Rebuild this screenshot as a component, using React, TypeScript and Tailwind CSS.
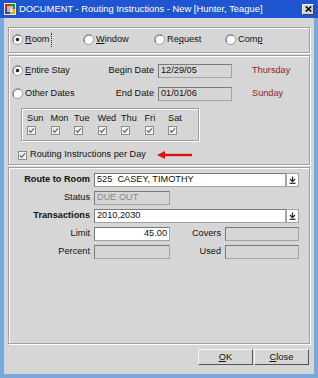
import React from 'react';

const font = { fontFamily: '"Liberation Sans", Arial, sans-serif' };

function Radio({ checked }: { checked?: boolean }) {
  return (
    <svg width="11" height="11" viewBox="0 0 11 11" className="shrink-0">
      <circle cx="5.5" cy="5.5" r="5" fill="#ffffff" stroke="#9a9a9a" strokeWidth="1" />
      <path d="M1.6 8.2 A5 5 0 0 1 8.2 1.6" fill="none" stroke="#7a7a7a" strokeWidth="1" />
      {checked && <circle cx="5.5" cy="5.5" r="1.8" fill="#222222" />}
    </svg>
  );
}

function Check({ size = 9 }: { size?: number }) {
  return (
    <svg width={size} height={size} viewBox="0 0 9 9" className="shrink-0">
      <rect x="0.5" y="0.5" width="8" height="8" fill="#f2f2f2" stroke="#8c8c8c" />
      <path d="M2 4.3 L3.6 6.2 L7 2.4" fill="none" stroke="#6a6a6a" strokeWidth="1.3" />
    </svg>
  );
}

function Field({
  w,
  value,
  white,
  right,
  muted,
}: {
  w: string;
  value?: string;
  white?: boolean;
  right?: boolean;
  muted?: boolean;
}) {
  return (
    <div
      className={`${w} h-[14px] shrink-0 border border-[#a4a4a4] border-t-[#7a7a7a] border-l-[#7a7a7a] flex items-center px-[2px] leading-none whitespace-pre ${
        white ? 'bg-white' : 'bg-[#d6d6d6]'
      } ${right ? 'justify-end' : ''} ${muted ? 'text-[#8a8a8a]' : 'text-[#111]'}`}
    >
      {value}
    </div>
  );
}

function DropButton() {
  return (
    <div className="w-[13px] h-[14px] shrink-0 bg-white border border-[#a4a4a4] flex items-center justify-center">
      <svg width="7" height="8" viewBox="0 0 7 8">
        <path d="M3.5 0.5 V5" stroke="#222" strokeWidth="1.2" />
        <path d="M1 3 L3.5 5.6 L6 3" fill="none" stroke="#222" strokeWidth="1.2" />
        <path d="M0.5 7.3 H6.5" stroke="#222" strokeWidth="1.2" />
      </svg>
    </div>
  );
}

const days = ['Sun', 'Mon', 'Tue', 'Wed', 'Thu', 'Fri', 'Sat'];

export default function App() {
  return (
    <div
      className="w-[318px] h-[378px] bg-[#7aa8dd] flex flex-col text-[9.2px] text-[#111] overflow-hidden"
      style={font}
    >
      {/* title bar */}
      <div className="h-[18px] shrink-0 bg-[#1f55d0] flex items-center pl-[4px] pr-[4px]">
        <svg width="12" height="12" viewBox="0 0 12 12" className="shrink-0">
          <rect x="0" y="0" width="12" height="12" fill="#f4e7c4" />
          <rect x="1" y="1" width="5" height="5" fill="#c42a2a" />
          <rect x="6" y="1" width="5" height="5" fill="#2a8a3a" />
          <rect x="1" y="6" width="5" height="5" fill="#2a44c4" />
          <rect x="6" y="6" width="5" height="5" fill="#e0b020" />
          <rect x="3" y="3" width="6" height="6" fill="#ffffff" opacity="0.6" />
        </svg>
        <span className="ml-[3px] text-white text-[9.4px] whitespace-nowrap">
          DOCUMENT - Routing Instructions - New [Hunter, Teague]
        </span>
        <div className="ml-auto w-[12px] h-[11px] bg-[#d6d6d6] border border-[#f4f4f4] border-r-[#404040] border-b-[#404040] flex items-center justify-center">
          <svg width="7" height="6" viewBox="0 0 7 6">
            <path d="M0.8 0.5 L6.2 5.5 M6.2 0.5 L0.8 5.5" stroke="#000" strokeWidth="1.6" />
          </svg>
        </div>
      </div>

      {/* client */}
      <div className="flex-1 mx-[4px] mb-[4px] bg-[#d6d6d6] flex flex-col px-[4px] pt-[9px]">
        {/* routing type */}
        <div className="h-[26px] shrink-0 border border-[#a0a0a0] shadow-[inset_1px_1px_0_#ffffff,1px_1px_0_#ffffff] flex items-center pl-[3px]">
          <div className="w-[71px] flex items-center gap-[2px]">
            <Radio checked />
            <span className="border-r border-dotted border-[#333] pr-[1px]">
              <span className="underline">R</span>oom
            </span>
          </div>
          <div className="w-[71px] flex items-center gap-[2px]">
            <Radio />
            <span>
              <span className="underline">W</span>indow
            </span>
          </div>
          <div className="w-[71px] flex items-center gap-[2px]">
            <Radio />
            <span>
              Re<span className="underline">q</span>uest
            </span>
          </div>
          <div className="w-[71px] flex items-center gap-[2px]">
            <Radio />
            <span>
              Com<span className="underline">p</span>
            </span>
          </div>
        </div>

        {/* dates */}
        <div className="mt-[2px] h-[110px] shrink-0 border border-[#a0a0a0] shadow-[inset_1px_1px_0_#ffffff,1px_1px_0_#ffffff] flex flex-col pt-[8px]">
          <div className="h-[14px] flex items-center">
            <div className="w-[80px] pl-[3px] flex items-center gap-[2px]">
              <Radio checked />
              <span>
                <span className="underline">E</span>ntire Stay
              </span>
            </div>
            <div className="w-[69px] text-right pr-[4px]">Begin Date</div>
            <Field w="w-[74px]" value="12/29/05" />
            <div className="ml-[20px] text-[#8b1f1f]">Thursday</div>
          </div>
          <div className="mt-[9px] h-[14px] flex items-center">
            <div className="w-[80px] pl-[3px] flex items-center gap-[2px]">
              <Radio />
              <span>Other Dates</span>
            </div>
            <div className="w-[69px] text-right pr-[4px]">End Date</div>
            <Field w="w-[74px]" value="01/01/06" />
            <div className="ml-[20px] text-[#8b1f1f]">Sunday</div>
          </div>
          <div className="mt-[7px] ml-[12px] w-[178px] h-[33px] border border-[#a0a0a0] shadow-[inset_1px_1px_0_#ffffff,1px_1px_0_#ffffff] flex pl-[5px] pt-[4px]">
            {days.map((d) => (
              <div key={d} className="w-[23.5px] flex flex-col">
                <div className="leading-[10px]">{d}</div>
                <div className="mt-[3px]">
                  <Check />
                </div>
              </div>
            ))}
          </div>
          <div className="mt-[8px] h-[12px] flex items-center pl-[9px]">
            <Check />
            <span className="ml-[3px]">Routing Instructions per Day</span>
            <svg width="36" height="8" viewBox="0 0 36 8" className="ml-[11px]">
              <path d="M6 4 H35" stroke="#e01010" strokeWidth="2.4" />
              <path d="M0 4 L8 0 L8 8 Z" fill="#e01010" />
            </svg>
          </div>
        </div>

        {/* routing target */}
        <div className="mt-[2px] h-[177px] shrink-0 border border-[#a0a0a0] shadow-[inset_1px_1px_0_#ffffff,1px_1px_0_#ffffff] flex flex-col gap-[4px] pt-[5px]">
          <div className="h-[14px] flex items-center">
            <div className="w-[85px] text-right font-bold pr-[4px]">Route to Room</div>
            <Field w="w-[192px]" value="525  CASEY, TIMOTHY" white />
            <DropButton />
          </div>
          <div className="h-[14px] flex items-center">
            <div className="w-[85px] text-right pr-[4px]">Status</div>
            <Field w="w-[76px]" value="DUE OUT" muted />
          </div>
          <div className="h-[14px] flex items-center">
            <div className="w-[85px] text-right font-bold pr-[4px]">Transactions</div>
            <Field w="w-[192px]" value="2010,2030" white />
            <DropButton />
          </div>
          <div className="h-[14px] flex items-center">
            <div className="w-[85px] text-right pr-[4px]">Limit</div>
            <Field w="w-[76px]" value="45.00" white right />
            <div className="w-[55px] text-right pr-[4px]">Covers</div>
            <Field w="w-[74px]" />
          </div>
          <div className="h-[14px] flex items-center">
            <div className="w-[85px] text-right pr-[4px]">Percent</div>
            <Field w="w-[76px]" />
            <div className="w-[55px] text-right pr-[4px]">Used</div>
            <Field w="w-[74px]" />
          </div>
        </div>

        {/* buttons */}
        <div className="mt-[5px] flex justify-end gap-[1px] pr-[1px]">
          <button className="w-[55px] h-[16px] bg-[#d6d6d6] border border-[#f6f6f6] border-r-[#555] border-b-[#555] text-[9.4px] leading-none">
            <span className="underline">O</span>K
          </button>
          <button className="w-[55px] h-[16px] bg-[#d6d6d6] border border-[#f6f6f6] border-r-[#555] border-b-[#555] text-[9.4px] leading-none">
            <span className="underline">C</span>lose
          </button>
        </div>
      </div>
    </div>
  );
}
